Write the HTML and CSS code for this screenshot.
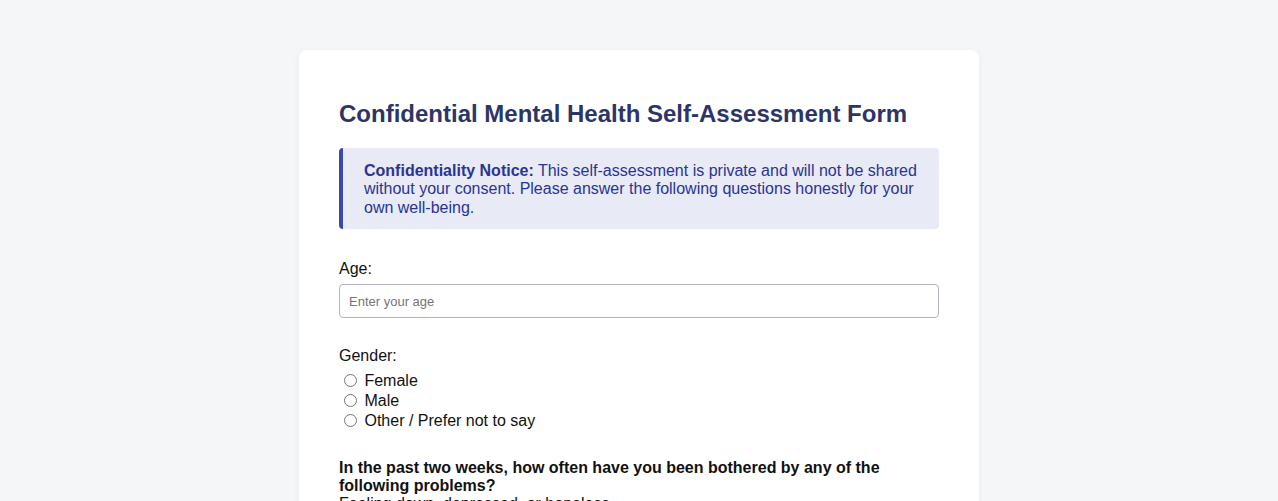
FILE: index.html
```html
<!DOCTYPE html>
<html lang="en">
<head>
<meta charset="utf-8">
<title>Confidential Mental Health Self-Assessment Form</title>
<link rel="stylesheet" href="styles.css">
</head>
<body>
<main class="card">
  <h1 class="title">Confidential Mental Health Self-Assessment Form</h1>
  <div class="notice">
    <strong>Confidentiality Notice:</strong> This self-assessment is private and will not be shared without your consent. Please answer the following questions honestly for your own well-being.
  </div>
  <form class="form">
    <div class="field">
      <label class="field-label" for="age">Age:</label>
      <input class="text-input" type="number" id="age" placeholder="Enter your age">
    </div>
    <div class="field field-options">
      <div class="field-label">Gender:</div>
      <label class="option"><input type="radio" name="gender"> Female</label>
      <label class="option"><input type="radio" name="gender"> Male</label>
      <label class="option"><input type="radio" name="gender"> Other / Prefer not to say</label>
    </div>
    <div class="field">
      <div class="question">In the past two weeks, how often have you been bothered by any of the following problems?</div>
      <div class="item">Feeling down, depressed, or hopeless</div>
    </div>
  </form>
</main>
</body>
</html>
```
FILE: styles.css
```css
* { box-sizing: border-box; }
html, body { margin: 0; padding: 0; }
body {
  background: #f5f6f8;
  font-family: "Liberation Sans", Arial, sans-serif;
  font-size: 16px;
  color: #111;
  padding-top: 50px;
}
.card {
  width: 680px;
  margin: 0 auto;
  background: #fff;
  border-radius: 8px;
  box-shadow: 0 2px 8px rgba(0, 0, 0, 0.05);
  padding: 50px 40px 40px;
}
.title {
  margin: 0 0 20px;
  font-size: 24px;
  line-height: 28px;
  font-weight: bold;
  color: #2c3566;
}
.notice {
  background: #e8eaf6;
  border-left: 4px solid #3949ab;
  border-radius: 4px;
  padding: 14px 20px 12px 21px;
  color: #283593;
  line-height: 18.4px;
}
.notice strong { color: #283593; }
.form { margin-top: 31px; }
.field { margin-bottom: 29px; }
.field-options { margin-bottom: 28px; }
.field-label {
  display: block;
  line-height: 18px;
  margin-bottom: 6px;
}
.text-input {
  display: block;
  width: 100%;
  height: 34px;
  padding: 8px 9px;
  border: 1px solid #b3b3c6;
  border-radius: 4px;
  font-family: "Liberation Sans", Arial, sans-serif;
  font-size: 13px;
  color: #111;
  background: #fff;
}
.text-input::placeholder { color: #757575; }
.option {
  display: block;
  height: 20px;
  line-height: 20px;
}
.option input { margin: 3px 3px 0 5px; vertical-align: top; width: 13px; height: 13px; }
.question {
  font-weight: bold;
  line-height: 18px;
}
.item { line-height: 18px; }
```
